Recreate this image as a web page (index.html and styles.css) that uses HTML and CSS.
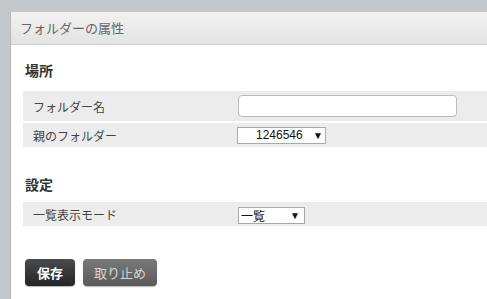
FILE: index.html
```html
<!DOCTYPE html>
<html lang="ja">
<head>
  <meta charset="UTF-8">
  <title>フォルダーの属性</title>
  <link rel="stylesheet" href="styles.css">
</head>
<body>

<div class="dialog">
  <div class="dialog-title">フォルダーの属性</div>

  <div class="dialog-body">
    <h2>場所</h2>
    <div class="row row-tall">
      <label for="folderName">フォルダー名</label>
      <input type="text" id="folderName" class="text-input">
    </div>
    <div class="row">
      <label>親のフォルダー</label>
      <div class="select select-parent">
        <span class="select-value">1246546</span>
        <span class="select-arrow">▼</span>
      </div>
    </div>

    <h2 class="second">設定</h2>
    <div class="row">
      <label>一覧表示モード</label>
      <div class="select select-mode">
        <span class="select-value">一覧</span>
        <span class="select-arrow">▼</span>
      </div>
    </div>

    <div class="actions">
      <button class="btn btn-save">保存</button>
      <button class="btn btn-cancel">取り止め</button>
    </div>
  </div>
</div>

</body>
</html>
```

FILE: styles.css
```css
body {
  margin: 0;
  background-color: #c5c8cb;
  font-family: "Noto Sans CJK JP", "Liberation Sans", sans-serif;
  height: 299px;
  overflow: hidden;
}
.dialog {
  margin: 12px 0 0 11px;
  background: #fff;
  height: 287px;
  box-shadow: -1px 0 0 #b4b7ba;
}
.dialog-title {
  height: 32px;
  line-height: 32px;
  padding-left: 9px;
  font-size: 13px;
  color: #666;
  background: linear-gradient(#f2f2f2, #e3e3e3);
  border-bottom: 1px solid #d0d0d0;
}
.dialog-body {
  padding-left: 12px;
}
h2 {
  margin: 0;
  padding: 15px 0 11px 2px;
  height: 20px;
  line-height: 20px;
  font-size: 14px;
  font-weight: bold;
  color: #333;
}
h2.second {
  padding-top: 25px;
  padding-bottom: 8px;
}
.row {
  display: flex;
  align-items: center;
  height: 24px;
  margin-bottom: 2px;
  background: #ececec;
}
.row-tall {
  height: 30px;
}
.row label {
  width: 205px;
  padding-left: 10px;
  font-size: 12px;
  color: #444;
}
.text-input {
  box-sizing: border-box;
  width: 219px;
  height: 22px;
  margin: 0;
  border: 1px solid #bbb;
  border-radius: 4px;
  background: #fff;
}
.select {
  box-sizing: border-box;
  display: flex;
  align-items: center;
  height: 17px;
  border: 1px solid #a8a8a8;
  background: #fff;
  font-family: "Liberation Sans", "Noto Sans CJK JP", sans-serif;
  font-size: 12px;
  color: #111;
}
.select-parent {
  width: 89px;
  margin-left: -1px;
  padding-left: 18px;
}
.select-mode {
  width: 67px;
  padding-left: 2px;
  margin-top: 2px;
}
.select-mode .select-value {
  font-family: "Noto Sans CJK JP", sans-serif;
  width: 49px;
}
.select-parent .select-value {
  width: 57px;
}
.select-arrow {
  font-size: 10px;
}
.actions {
  display: flex;
  gap: 8px;
  padding: 31px 0 0 2px;
}
.btn {
  height: 27px;
  border: none;
  border-radius: 4px;
  font-family: "Noto Sans CJK JP", sans-serif;
  font-size: 13px;
  cursor: pointer;
  box-shadow: 0 1px 1px #bbb;
}
.btn-save {
  width: 50px;
  color: #fff;
  font-weight: bold;
  background: linear-gradient(#4a4c4e, #232425);
}
.btn-cancel {
  width: 74px;
  color: #d4d4d4;
  background: linear-gradient(#7a7a7a, #595959);
}
```
